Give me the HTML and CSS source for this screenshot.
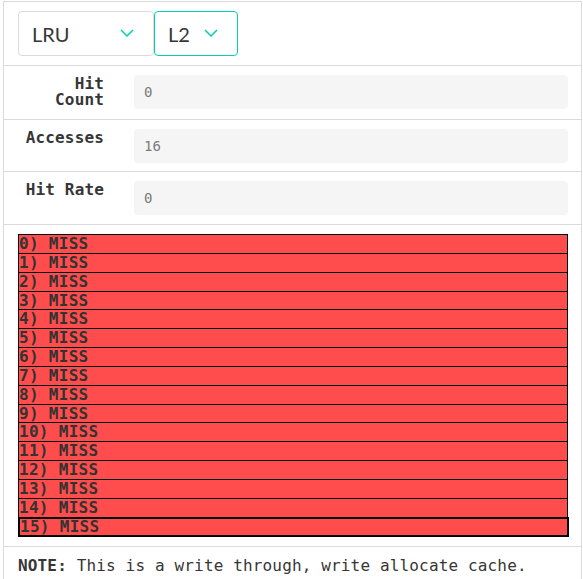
FILE: index.html
```html
<!DOCTYPE html>
<html lang="en">
<head>
<meta charset="utf-8">
<title>Cache simulator</title>
<link rel="stylesheet" href="styles.css">
</head>
<body>
<div class="panel">
  <div class="block controls">
    <div class="select select-policy">
      <select><option>LRU</option></select>
      <svg class="chev" width="14" height="8" viewBox="0 0 14 8"><polyline points="1,1 7,7 13,1" fill="none" stroke="#00d1b2" stroke-width="1.5"/></svg>
    </div>
    <div class="select select-level is-focused">
      <select><option>L2</option></select>
      <svg class="chev" width="14" height="8" viewBox="0 0 14 8"><polyline points="1,1 7,7 13,1" fill="none" stroke="#00d1b2" stroke-width="1.5"/></svg>
    </div>
  </div>
  <div class="block field field-tall">
    <label class="field-label">Hit Count</label>
    <input class="input" value="0" disabled>
  </div>
  <div class="block field field-short">
    <label class="field-label">Accesses</label>
    <input class="input" value="16" disabled>
  </div>
  <div class="block field">
    <label class="field-label">Hit Rate</label>
    <input class="input" value="0" disabled>
  </div>
  <div class="block results">
    <div class="miss">0) MISS</div>
    <div class="miss">1) MISS</div>
    <div class="miss">2) MISS</div>
    <div class="miss">3) MISS</div>
    <div class="miss">4) MISS</div>
    <div class="miss">5) MISS</div>
    <div class="miss">6) MISS</div>
    <div class="miss">7) MISS</div>
    <div class="miss">8) MISS</div>
    <div class="miss">9) MISS</div>
    <div class="miss">10) MISS</div>
    <div class="miss">11) MISS</div>
    <div class="miss">12) MISS</div>
    <div class="miss">13) MISS</div>
    <div class="miss">14) MISS</div>
    <div class="miss is-current">15) MISS</div>
  </div>
  <div class="block note"><strong>NOTE:</strong> This is a write through, write allocate cache.</div>
</div>
</body>
</html>
```
FILE: styles.css
```css
* { box-sizing: border-box; }
html, body { margin: 0; padding: 0; background: #fff; }
body {
  font-family: "DejaVu Sans Mono", monospace;
  font-size: 16px;
  color: #363636;
  letter-spacing: 0.15px;
}
.panel {
  margin: 1px 0 0 3px;
  width: 579px;
  border: 1px solid #dbdbdb;
  border-bottom: none;
}
.block {
  border-bottom: 1px solid #dbdbdb;
  padding: 9px 13px 9px 14px;
}
.controls { display: flex; }
.select { position: relative; }
.select select {
  appearance: none;
  -webkit-appearance: none;
  display: block;
  width: 100%;
  height: 45px;
  margin: 0;
  padding: 0 0 0 13px;
  border: 1px solid #dbdbdb;
  border-radius: 4px;
  background: #fff;
  font-family: Lato, "Open Sans", sans-serif;
  font-size: 20px;
  color: #363636;
  letter-spacing: 0;
  outline: none;
}
.select-policy { width: 136px; }
.select-level { width: 84px; }
.select.is-focused select { border-color: #00d1b2; }
.chev { position: absolute; right: 20px; top: 18px; pointer-events: none; }

.field { display: flex; align-items: flex-start; }
.field-tall { padding-bottom: 10px; }
.field-short { padding-bottom: 8px; }
.field-label {
  flex: 0 0 86px;
  margin-right: 30px;
  padding-top: 1px;
  text-align: right;
  font-weight: bold;
  line-height: 16px;
  color: #363636;
}
.input {
  flex: 1 1 auto;
  min-width: 0;
  height: 34px;
  margin: 0;
  padding: 0 10px;
  border: none;
  border-radius: 4px;
  background: #f5f5f5;
  font-family: "DejaVu Sans Mono", monospace;
  font-size: 14px;
  letter-spacing: 0;
  color: #7a7a7a;
  -webkit-text-fill-color: #7a7a7a;
  opacity: 1;
}

.miss {
  height: 19.85px;
  line-height: 17.85px;
  border: 1px solid #000;
  background: #ff4d4d;
  color: #333;
  font-weight: bold;
  letter-spacing: 0.3px;
  white-space: nowrap;
}
.miss + .miss { margin-top: -1px; }
.miss.is-current {
  height: 20.6px;
  line-height: 16.6px;
  border-width: 2px;
  margin-right: -1px;
}
.note { padding-top: 9px; line-height: normal; color: #363636; }
.note strong { font-weight: bold; }
```
